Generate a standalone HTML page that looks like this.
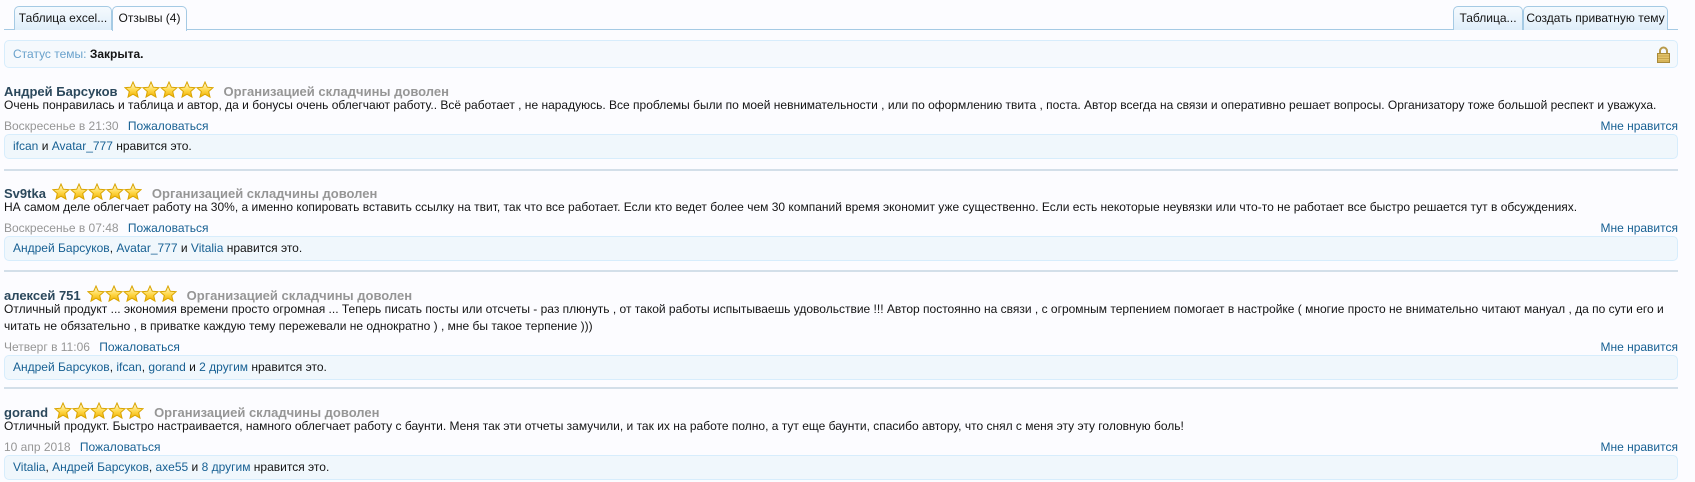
<!DOCTYPE html>
<html><head><meta charset="utf-8">
<style>
*{box-sizing:border-box;margin:0;padding:0}
body{width:1695px;height:482px;overflow:hidden;background:#fcfcff;font-family:"Liberation Sans",Arial,sans-serif;font-size:12px;color:#141414;position:relative}
a{color:#176093;text-decoration:none}
.tabbar{position:absolute;left:4px;top:6px;width:1674px;height:24px;border-bottom:1px solid #a5cae4}
.tab{position:absolute;top:0;height:24px;border:1px solid #a5cae4;border-bottom:none;border-radius:5px 5px 0 0;background:linear-gradient(#f5fafe,#dfeefa);font-size:12px;line-height:22px;text-align:center;color:#141414}
.tab.act{background:#fcfcff;height:25px}
.status{position:absolute;left:4px;top:40px;width:1674px;height:28px;border:1px solid #d7edfc;border-radius:5px;background:#f5f9fd;padding-left:8px;line-height:26px;font-size:12px}
.status span{color:#6aa2cc}
.post{position:absolute;left:4px;width:1674px}
.name{height:16px;line-height:16px;font-weight:bold;white-space:nowrap;font-size:13px}
.name a{color:#2b485c}
.name svg{vertical-align:-3px;margin-left:6px}
.name .r{color:#969696;margin-left:10px}
.txt{line-height:17px;font-size:12px}
.meta{height:16px;line-height:16px;margin-top:4px;font-size:12px;color:#969696;position:relative}
.meta a{margin-left:6px}
.meta .like{position:absolute;right:0;top:0}
.likes{height:25px;border:1px solid #d7edfc;border-radius:5px;background:#f0f7fc;font-size:12px;line-height:23px;padding-left:8px}
.sep{position:absolute;left:4px;width:1674px;height:2px;background:#d3dfe9}
</style></head><body>
<svg width="0" height="0" style="position:absolute"><defs>
<linearGradient id="g" x1="0" y1="0" x2="0" y2="1"><stop offset="0" stop-color="#fffbe0"/><stop offset=".55" stop-color="#ffd84a"/><stop offset="1" stop-color="#f0b000"/></linearGradient>
<symbol id="s" viewBox="0 0 18 18"><path d="M9 1l2.3 5.2 5.7.5-4.3 3.8 1.3 5.6L9 13.2 4 16.1l1.3-5.6L1 6.7l5.7-.5z" fill="url(#g)" stroke="#d9a400" stroke-width="1"/></symbol>
</defs></svg>

<div class="tabbar">
<div class="tab" style="left:10px;width:98px">Таблица excel...</div>
<div class="tab act" style="left:108px;width:75px">Отзывы (4)</div>
<div class="tab" style="left:1449px;width:70px">Таблица...</div>
<div class="tab" style="left:1519px;width:145px">Создать приватную тему</div>
</div>

<div class="status"><span>Статус темы:</span> <b>Закрыта.</b>
<svg style="position:absolute;left:1652px;top:5px" width="13" height="17" viewBox="0 0 13 17"><path d="M3 8V5a3.5 3.5 0 0 1 7 0v3" fill="none" stroke="#b89a4a" stroke-width="2"/><rect x="0.5" y="7.5" width="12" height="9" fill="#e2c36a" stroke="#a88a3a"/><path d="M1 10h11M1 12.5h11M1 15h11" stroke="#c9a64a"/></svg>
</div>

<div class="post" style="top:81px">
<div class="name"><a>Андрей Барсуков</a><svg width="90" height="18"><use href="#s" x="0" width="18" height="18"/><use href="#s" x="18" width="18" height="18"/><use href="#s" x="36" width="18" height="18"/><use href="#s" x="54" width="18" height="18"/><use href="#s" x="72" width="18" height="18"/></svg><span class="r">Организацией складчины доволен</span></div>
<div class="txt">Очень понравилась и таблица и автор, да и бонусы очень облегчают работу.. Всё работает , не нарадуюсь. Все проблемы были по моей невнимательности , или по оформлению твита , поста. Автор всегда на связи и оперативно решает вопросы. Организатору тоже большой респект и уважуха.</div>
<div class="meta">Воскресенье в 21:30 <a>Пожаловаться</a><a class="like">Мне нравится</a></div>
<div class="likes"><a>ifcan</a> и <a>Avatar_777</a> нравится это.</div>
</div>
<div class="sep" style="top:169px"></div>

<div class="post" style="top:183px">
<div class="name"><a>Sv9tka</a><svg width="90" height="18"><use href="#s" x="0" width="18" height="18"/><use href="#s" x="18" width="18" height="18"/><use href="#s" x="36" width="18" height="18"/><use href="#s" x="54" width="18" height="18"/><use href="#s" x="72" width="18" height="18"/></svg><span class="r">Организацией складчины доволен</span></div>
<div class="txt">НА самом деле облегчает работу на 30%, а именно копировать вставить ссылку на твит, так что все работает. Если кто ведет более чем 30 компаний время экономит уже существенно. Если есть некоторые неувязки или что-то не работает все быстро решается тут в обсуждениях.</div>
<div class="meta">Воскресенье в 07:48 <a>Пожаловаться</a><a class="like">Мне нравится</a></div>
<div class="likes"><a>Андрей Барсуков</a>, <a>Avatar_777</a> и <a>Vitalia</a> нравится это.</div>
</div>
<div class="sep" style="top:270px"></div>

<div class="post" style="top:285px">
<div class="name"><a>алексей 751</a><svg width="90" height="18"><use href="#s" x="0" width="18" height="18"/><use href="#s" x="18" width="18" height="18"/><use href="#s" x="36" width="18" height="18"/><use href="#s" x="54" width="18" height="18"/><use href="#s" x="72" width="18" height="18"/></svg><span class="r">Организацией складчины доволен</span></div>
<div class="txt">Отличный продукт ... экономия времени просто огромная ... Теперь писать посты или отсчеты - раз плюнуть , от такой работы испытываешь удовольствие !!! Автор постоянно на связи , с огромным терпением помогает в настройке ( многие просто не внимательно читают мануал , да по сути его и читать не обязательно , в приватке каждую тему пережевали не однократно ) , мне бы такое терпение )))</div>
<div class="meta">Четверг в 11:06 <a>Пожаловаться</a><a class="like">Мне нравится</a></div>
<div class="likes"><a>Андрей Барсуков</a>, <a>ifcan</a>, <a>gorand</a> и <a>2 другим</a> нравится это.</div>
</div>
<div class="sep" style="top:387px"></div>

<div class="post" style="top:402px">
<div class="name"><a>gorand</a><svg width="90" height="18"><use href="#s" x="0" width="18" height="18"/><use href="#s" x="18" width="18" height="18"/><use href="#s" x="36" width="18" height="18"/><use href="#s" x="54" width="18" height="18"/><use href="#s" x="72" width="18" height="18"/></svg><span class="r">Организацией складчины доволен</span></div>
<div class="txt">Отличный продукт. Быстро настраивается, намного облегчает работу с баунти. Меня так эти отчеты замучили, и так их на работе полно, а тут еще баунти, спасибо автору, что снял с меня эту эту головную боль!</div>
<div class="meta">10 апр 2018 <a>Пожаловаться</a><a class="like">Мне нравится</a></div>
<div class="likes"><a>Vitalia</a>, <a>Андрей Барсуков</a>, <a>axe55</a> и <a>8 другим</a> нравится это.</div>
</div>
</body></html>
